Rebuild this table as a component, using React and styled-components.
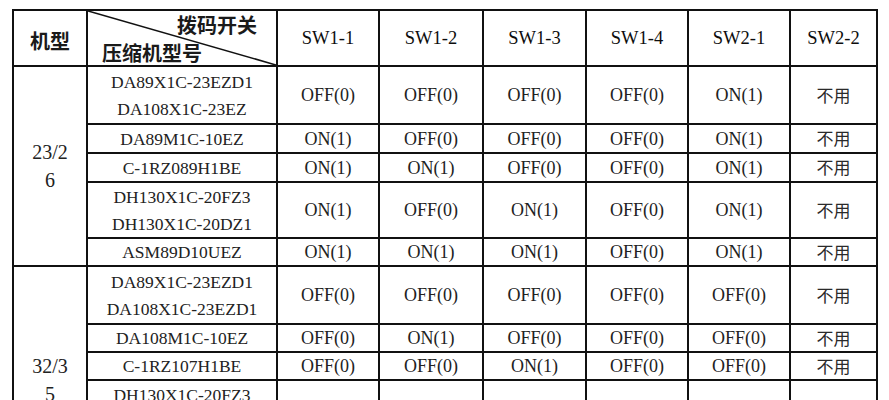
import styled, { createGlobalStyle } from 'styled-components'

const GlobalStyle = createGlobalStyle`
  body {
    margin: 0;
    background: #fff;
  }
`

const Sheet = styled.table`
  margin: 9px 0 0 12px;
  width: 866px;
  border-collapse: collapse;
  table-layout: fixed;
  font-family: "Liberation Serif", "Times New Roman", serif;
  color: #222;
`

const Col = styled.col`
  width: ${(p) => p.$w}px;
`

const Row = styled.tr`
  height: ${(p) => p.$h}px;
`

const Cell = styled.td`
  border: 2px solid #111;
  padding: 0;
  text-align: center;
  vertical-align: middle;
  font-size: ${(p) => p.$size || 18}px;
  line-height: 24px;
  white-space: nowrap;
`

const HeadCell = styled(Cell)`
  font-size: 18.5px;
  color: #0d0d0d;
`

const TitleCell = styled(Cell)`
  padding-top: 5px;
  font-family: "Noto Sans CJK SC", sans-serif;
  font-size: 20px;
  font-weight: 700;
  color: #1a1a1a;
`

const SplitCell = styled(Cell)`
  position: relative;
  padding: 1px 19px 0 14px;
  font-family: "Noto Sans CJK SC", sans-serif;
  font-size: 20px;
  font-weight: 700;
  color: #1a1a1a;
`

const Diagonal = styled.svg`
  position: absolute;
  inset: 0;
  width: 100%;
  height: 100%;
  pointer-events: none;
`

const SplitText = styled.div`
  display: flex;
  flex-direction: column;
  gap: 4px;
`

const SplitLabel = styled.span`
  text-align: ${(p) => p.$align};
`

const Lines = styled.div`
  display: flex;
  flex-direction: column;
  align-items: center;
  gap: ${(p) => p.$gap || 3}px;
`

const Unused = styled.span`
  font-family: "Noto Sans CJK SC", sans-serif;
  font-size: 17px;
  color: #2a2a2a;
`

const switches = ['SW1-1', 'SW1-2', 'SW1-3', 'SW1-4', 'SW2-1', 'SW2-2']

const OFF = 'OFF(0)'
const ON = 'ON(1)'

const groups = [
  {
    model: ['23/2', '6'],
    rows: [
      { h: 58, codes: ['DA89X1C-23EZD1', 'DA108X1C-23EZ'], sw: [OFF, OFF, OFF, OFF, ON] },
      { h: 29, codes: ['DA89M1C-10EZ'], sw: [ON, OFF, OFF, OFF, ON] },
      { h: 29, codes: ['C-1RZ089H1BE'], sw: [ON, ON, OFF, OFF, ON] },
      { h: 56, codes: ['DH130X1C-20FZ3', 'DH130X1C-20DZ1'], sw: [ON, OFF, ON, OFF, ON] },
      { h: 28, codes: ['ASM89D10UEZ'], sw: [ON, ON, ON, OFF, ON] },
    ],
  },
  {
    model: ['32/3', '5'],
    rows: [
      { h: 58, codes: ['DA89X1C-23EZD1', 'DA108X1C-23EZD1'], sw: [OFF, OFF, OFF, OFF, OFF] },
      { h: 28, codes: ['DA108M1C-10EZ'], sw: [OFF, ON, OFF, OFF, OFF] },
      { h: 28, codes: ['C-1RZ107H1BE'], sw: [OFF, OFF, ON, OFF, OFF] },
      { h: 56, codes: ['DH130X1C-20FZ3', 'DH130X1C-20DZ1'], sw: [OFF, OFF, OFF, OFF, OFF] },
      { h: 58, codes: ['DH130M1C-20FZ3', 'DH130M1C-20DZ1'], sw: [OFF, OFF, OFF, OFF, OFF] },
    ],
  },
]

const widths = [74, 190, 102, 104, 103, 102, 102, 87]

export default function App() {
  return (
    <>
      <GlobalStyle />
      <Sheet>
        <colgroup>
          {widths.map((w, i) => (
            <Col key={i} $w={w} />
          ))}
        </colgroup>
        <thead>
          <Row $h={56}>
            <TitleCell>机型</TitleCell>
            <SplitCell>
              <Diagonal preserveAspectRatio="none" viewBox="0 0 100 100">
                <line x1="0" y1="0" x2="100" y2="100" stroke="#111" strokeWidth="1.6" vectorEffect="non-scaling-stroke" />
              </Diagonal>
              <SplitText>
                <SplitLabel $align="right">拨码开关</SplitLabel>
                <SplitLabel $align="left">压缩机型号</SplitLabel>
              </SplitText>
            </SplitCell>
            {switches.map((s) => (
              <HeadCell key={s}>{s}</HeadCell>
            ))}
          </Row>
        </thead>
        <tbody>
          {groups.map((g) =>
            g.rows.map((r, i) => (
              <Row key={g.model.join() + i} $h={r.h}>
                {i === 0 && (
                  <Cell $size={20} rowSpan={g.rows.length}>
                    <Lines $gap={4}>
                      {g.model.map((m) => (
                        <span key={m}>{m}</span>
                      ))}
                    </Lines>
                  </Cell>
                )}
                <Cell $size={17.5}>
                  <Lines>
                    {r.codes.map((c) => (
                      <span key={c}>{c}</span>
                    ))}
                  </Lines>
                </Cell>
                {r.sw.map((v, j) => (
                  <Cell key={j}>{v}</Cell>
                ))}
                <Cell>
                  <Unused>不用</Unused>
                </Cell>
              </Row>
            ))
          )}
        </tbody>
      </Sheet>
    </>
  )
}
